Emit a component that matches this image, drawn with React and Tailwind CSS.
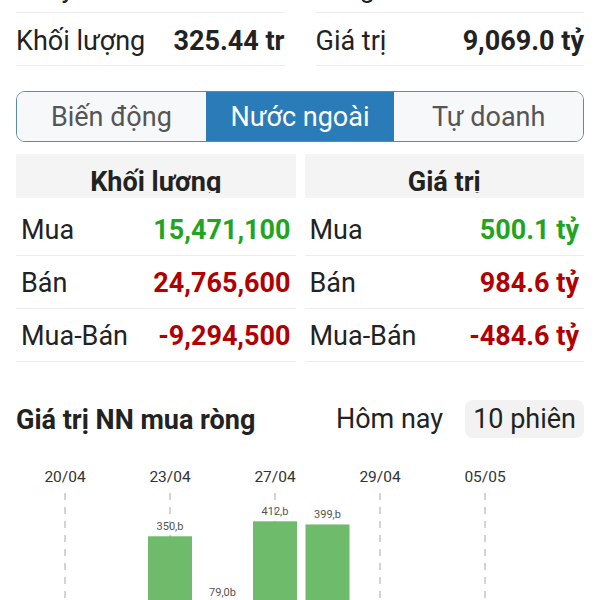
import React from 'react';

const topRows = [
    [
        { label: 'Thay đổi', value: '-8.21', color: 'text-[#b00000]' },
        { label: 'Tăng/Giảm', value: '195/270', color: 'text-[#1fa51f]' },
    ],
    [
        { label: 'Khối lượng', value: '325.44 tr', color: 'text-[#222]' },
        { label: 'Giá trị', value: '9,069.0 tỷ', color: 'text-[#222]' },
    ],
];

const tabs = ['Biến động', 'Nước ngoài', 'Tự doanh'];

const foreign = [
    {
        title: 'Khối lượng',
        rows: [
            { label: 'Mua', value: '15,471,100', color: 'text-[#1fa51f]' },
            { label: 'Bán', value: '24,765,600', color: 'text-[#b00000]' },
            { label: 'Mua-Bán', value: '-9,294,500', color: 'text-[#b00000]' },
        ],
    },
    {
        title: 'Giá trị',
        rows: [
            { label: 'Mua', value: '500.1 tỷ', color: 'text-[#1fa51f]' },
            { label: 'Bán', value: '984.6 tỷ', color: 'text-[#b00000]' },
            { label: 'Mua-Bán', value: '-484.6 tỷ', color: 'text-[#b00000]' },
        ],
    },
];

// 10 phiên, nhãn ngày cách một cột
const sessions = [
    { date: '20/04', v: -140 },
    { date: '22/04', v: -60 },
    { date: '23/04', v: 350, label: '350,b' },
    { date: '24/04', v: 79, label: '79,0b' },
    { date: '27/04', v: 412, label: '412,b' },
    { date: '28/04', v: 399, label: '399,b' },
    { date: '29/04', v: -220 },
    { date: '04/05', v: -310 },
    { date: '05/05', v: -180 },
    { date: '06/05', v: -90 },
];

const NetChart = () => {
    const step = 52.5;
    const first = 65;
    const base = 166;
    const k = 0.242;
    return (
        <svg width="600" height="260" className="block" style={{ fontFamily: 'Roboto, sans-serif' }}>
            {sessions.map((s, i) => {
                const cx = first + i * step;
                if (i % 2 !== 0) return null;
                return (
                    <g key={s.date}>
                        <text x={cx} y={27} textAnchor="middle" fontSize="15.5" fill="#333">{s.date}</text>
                        <line x1={cx} y1={38} x2={cx} y2={260} stroke="#a8a8a8" strokeWidth="1" strokeDasharray="7 7" />
                    </g>
                );
            })}
            {sessions.map((s, i) => {
                const cx = first + i * step;
                const h = Math.abs(s.v) * k;
                const y = s.v >= 0 ? base - h : base;
                return (
                    <g key={'b' + s.date}>
                        <rect x={cx - 22} y={y} width="44" height={h} fill={s.v >= 0 ? '#6dbb6b' : '#e06c6c'} />
                        {s.label && (
                            <text x={cx} y={y - 6} textAnchor="middle" fontSize="11" fill="#555">{s.label}</text>
                        )}
                    </g>
                );
            })}
        </svg>
    );
};

const App = () => {
    return (
        <div className="min-h-screen bg-white text-[#222] px-4 font-['Roboto',sans-serif]">
            <div className="-mt-[40px]">
                {topRows.map((row, ri) => (
                    <div key={ri} className="flex gap-[31px]">
                        {row.map(cell => (
                            <div key={cell.label} className="flex-1 h-[53px] pt-[4px] flex items-center justify-between whitespace-nowrap border-b border-[#ececec] text-[27px]">
                                <span>{cell.label}</span>
                                <span className={`font-bold ${cell.color}`}>{cell.value}</span>
                            </div>
                        ))}
                    </div>
                ))}
            </div>

            <div className="mt-[25px] flex h-[51px] rounded-[9px] border border-[#5a8f99] overflow-hidden">
                {tabs.map(t => (
                    <div
                        key={t}
                        className={t === 'Nước ngoài'
                            ? 'flex-1 flex items-center justify-center pt-[2px] bg-[#2a7cb9] text-white text-[27px]'
                            : 'flex-1 flex items-center justify-center pt-[2px] bg-[#f7f8f9] text-[#555] text-[27px]'}
                    >
                        {t}
                    </div>
                ))}
            </div>

            <div className="mt-[12px] flex gap-[9px]">
                {foreign.map(col => (
                    <div key={col.title} className="flex-1">
                        <div className="h-[44px] bg-[#f4f4f4]">
                            <div className="h-[39px] overflow-hidden pt-[13px] leading-[30px] text-center text-[27px] font-bold">
                                {col.title}
                            </div>
                        </div>
                        <div className="mt-[5px]">
                            {col.rows.map(r => (
                                <div key={r.label} className="h-[53px] pt-[3px] flex items-center justify-between whitespace-nowrap px-[5px] border-b border-[#ececec] text-[27px]">
                                    <span>{r.label}</span>
                                    <span className={`font-bold ${r.color}`}>{r.value}</span>
                                </div>
                            ))}
                        </div>
                    </div>
                ))}
            </div>

            <div className="mt-[38px] flex items-center h-[37px]">
                <h2 className="flex-1 pt-[3px] text-[27px] font-bold">Giá trị NN mua ròng</h2>
                <div className="flex items-center gap-[22px] text-[27px]">
                    <span className="pt-[2px]">Hôm nay</span>
                    <span className="h-[38px] flex items-center pt-[2px] px-[8px] rounded-lg bg-[#f2f2f2]">10 phiên</span>
                </div>
            </div>

            <div className="-mx-4 mt-[18px]">
                <NetChart />
            </div>
        </div>
    );
};

export default App;
